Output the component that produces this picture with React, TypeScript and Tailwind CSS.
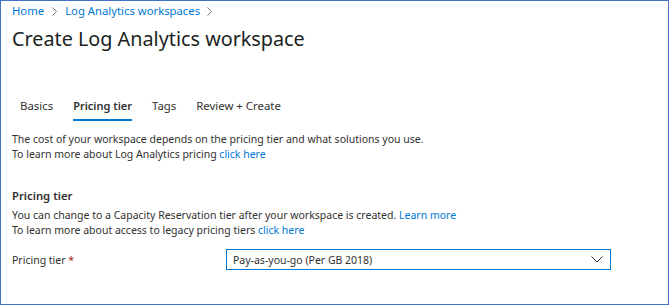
function Chevron() {
  return (
    <svg width="5" height="9" viewBox="0 0 5 9" fill="none" className="shrink-0">
      <path d="M0.5 0.5 L4.5 4.5 L0.5 8.5" stroke="#797775" strokeWidth="1" />
    </svg>
  );
}

export default function App() {
  const tabs = ["Basics", "Pricing tier", "Tags", "Review + Create"];
  return (
    <div className="h-[305px] w-[669px] border border-[#4472c4] bg-white pl-[11px] font-['Noto_Sans',sans-serif] text-[#323130]">
      {/* breadcrumb */}
      <div className="flex items-center pt-[1px] text-[11.3px] leading-[18px] text-[#0078d4]">
        <span>Home</span>
        <span className="mx-[8px] flex">
          <Chevron />
        </span>
        <span>Log Analytics workspaces</span>
        <span className="ml-[7px] flex">
          <Chevron />
        </span>
      </div>
      <h1 className="mt-[5px] text-[19.8px] leading-[28px] font-normal text-[#201f1e]">
        Create Log Analytics workspace
      </h1>

      {/* tabs */}
      <div className="mt-[44px] flex gap-[20px] pl-[8px] text-[11.4px] leading-[18px]">
        {tabs.map((t) => (
          <div
            key={t}
            className={
              t === "Pricing tier"
                ? "border-b-2 border-[#0078d4] pb-[4px] text-[11px] font-semibold"
                : "border-b-2 border-transparent pb-[4px]"
            }
          >
            {t}
          </div>
        ))}
      </div>

      <div className="mt-[11px] text-[10.5px] leading-[14.5px]">
        <p>The cost of your workspace depends on the pricing tier and what solutions you use.</p>
        <p>
          To learn more about Log Analytics pricing <span className="text-[#0078d4]">click here</span>
        </p>
      </div>

      <h2 className="mt-[26px] text-[11.3px] leading-[18px] font-semibold">Pricing tier</h2>
      <div className="mt-[3px] text-[10.5px] leading-[14.5px]">
        <p>
          You can change to a Capacity Reservation tier after your workspace is created.{" "}
          <span className="text-[#0078d4]">Learn more</span>
        </p>
        <p>
          To learn more about access to legacy pricing tiers <span className="text-[#0078d4]">click here</span>
        </p>
      </div>

      <div className="mt-[12px] flex items-center text-[10.5px]">
        <div className="w-[214px] leading-[20px]">
          Pricing tier <span className="text-[#a4262c]">*</span>
        </div>
        <div className="flex h-[21px] w-[385px] items-center justify-between border border-[#0078d4] pl-[6px] pr-[7px] leading-[18px]">
          <span>Pay-as-you-go (Per GB 2018)</span>
          <svg width="12" height="7" viewBox="0 0 12 7" fill="none">
            <path d="M0.5 0.5 L6 6 L11.5 0.5" stroke="#323130" strokeWidth="1" />
          </svg>
        </div>
      </div>
    </div>
  );
}
